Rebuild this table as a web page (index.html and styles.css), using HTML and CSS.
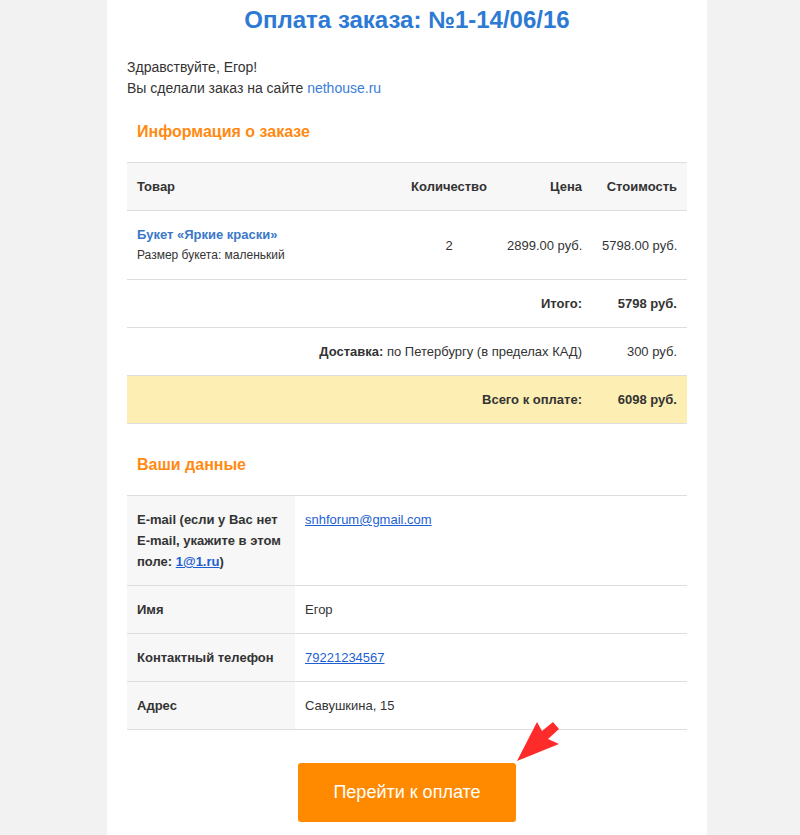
FILE: index.html
```html
<!DOCTYPE html>
<html lang="ru">
<head>
  <meta charset="UTF-8" />
  <meta name="viewport" content="width=device-width, initial-scale=1.0"/>
  <title>Оплата заказа</title>
  <link rel="stylesheet" href="styles.css">
</head>
<body>
  <div class="letter">
    <h1>Оплата заказа: №1-14/06/16</h1>

    <p class="greeting">
      Здравствуйте, Егор!<br>
      Вы сделали заказ на сайте <a href="#" class="site">nethouse.ru</a>
    </p>

    <h2>Информация о заказе</h2>
    <table class="order">
      <tr class="head">
        <td class="name">Товар</td>
        <td class="qty">Количество</td>
        <td class="num price">Цена</td>
        <td class="num">Стоимость</td>
      </tr>
      <tr class="item">
        <td>
          <a href="#" class="product">Букет «Яркие краски»</a>
          <span class="note">Размер букета: маленький</span>
        </td>
        <td class="qty">2</td>
        <td class="num">2899.00 руб.</td>
        <td class="num">5798.00 руб.</td>
      </tr>
      <tr>
        <td colspan="3" class="num"><b>Итого:</b></td>
        <td class="num"><b>5798 руб.</b></td>
      </tr>
      <tr>
        <td colspan="3" class="num"><b>Доставка:</b> по Петербургу (в пределах КАД)</td>
        <td class="num">300 руб.</td>
      </tr>
      <tr class="total">
        <td colspan="3" class="num"><b>Всего к оплате:</b></td>
        <td class="num"><b>6098 руб.</b></td>
      </tr>
    </table>

    <h2 class="later">Ваши данные</h2>
    <table class="data">
      <tr>
        <th>E-mail (если у Вас нет E-mail, укажите в этом поле: <a href="#">1@1.ru</a>)</th>
        <td><a href="#">snhforum@gmail.com</a></td>
      </tr>
      <tr>
        <th>Имя</th>
        <td>Егор</td>
      </tr>
      <tr>
        <th>Контактный телефон</th>
        <td><a href="#">79221234567</a></td>
      </tr>
      <tr>
        <th>Адрес</th>
        <td>Савушкина, 15</td>
      </tr>
    </table>

    <div class="pay">
      <a href="#" class="pay-btn">Перейти к оплате</a>
      <svg class="pointer" viewBox="510 715 55 50" width="55" height="50">
        <polygon points="517,760 537,721 542,730 553,721 559,728 548,738 559,743" fill="#fe2b2b"/>
      </svg>
    </div>
  </div>
</body>
</html>
```

FILE: styles.css
```css
body {
  margin: 0;
  padding-left: 14px;
  background: #f2f2f2;
  font-family: "Liberation Sans", Arial, sans-serif;
  color: #333;
}

.letter {
  width: 560px;
  min-height: 815px;
  margin: 0 auto;
  padding: 0 20px 20px;
  background: #fff;
}

h1 {
  margin: 0;
  font-size: 24px;
  line-height: 40px;
  text-align: center;
  color: #2d7ad5;
}

.greeting {
  margin: 17px 0 0;
  font-size: 14px;
  line-height: 21px;
}

.site {
  color: #3b7dd8;
  text-decoration: none;
}

h2 {
  margin: 23px 0 20px;
  padding-left: 10px;
  font-size: 16px;
  line-height: 20px;
  color: #ff8a12;
}

h2.later {
  margin-top: 31px;
}

table {
  width: 100%;
  border-collapse: collapse;
  table-layout: fixed;
  font-size: 13px;
  line-height: 21px;
}

td, th {
  padding: 13px 10px;
  border-bottom: 1px solid #dedede;
  vertical-align: top;
}

.order tr:first-child td {
  border-top: 1px solid #dedede;
}

.order .head td {
  background: #f7f7f7;
  font-weight: bold;
}

.order .name { width: 254px; }
.order .qty { width: 76px; text-align: center; }
.order .price { width: 75px; }

.order .item td {
  vertical-align: middle;
}

.order .num {
  text-align: right;
  white-space: nowrap;
}

.product {
  display: block;
  color: #3a78c9;
  font-weight: bold;
  text-decoration: none;
}

.note {
  display: block;
  font-size: 12px;
}

.order .total td {
  background: #fdefb3;
}

.data tr:first-child th,
.data tr:first-child td {
  border-top: 1px solid #dedede;
}

.data th {
  width: 148px;
  text-align: left;
  background: #f7f7f7;
}

.data a {
  color: #1d5fd2;
}

.pay {
  position: relative;
  margin-top: 33px;
  text-align: center;
}

.pay-btn {
  display: inline-block;
  width: 218px;
  padding: 19px 0;
  border-radius: 3px;
  background: #ff8a00;
  color: #fff;
  font-size: 18px;
  line-height: 21px;
  text-decoration: none;
}

.pointer {
  position: absolute;
  left: 383px;
  top: -47px;
}
```
